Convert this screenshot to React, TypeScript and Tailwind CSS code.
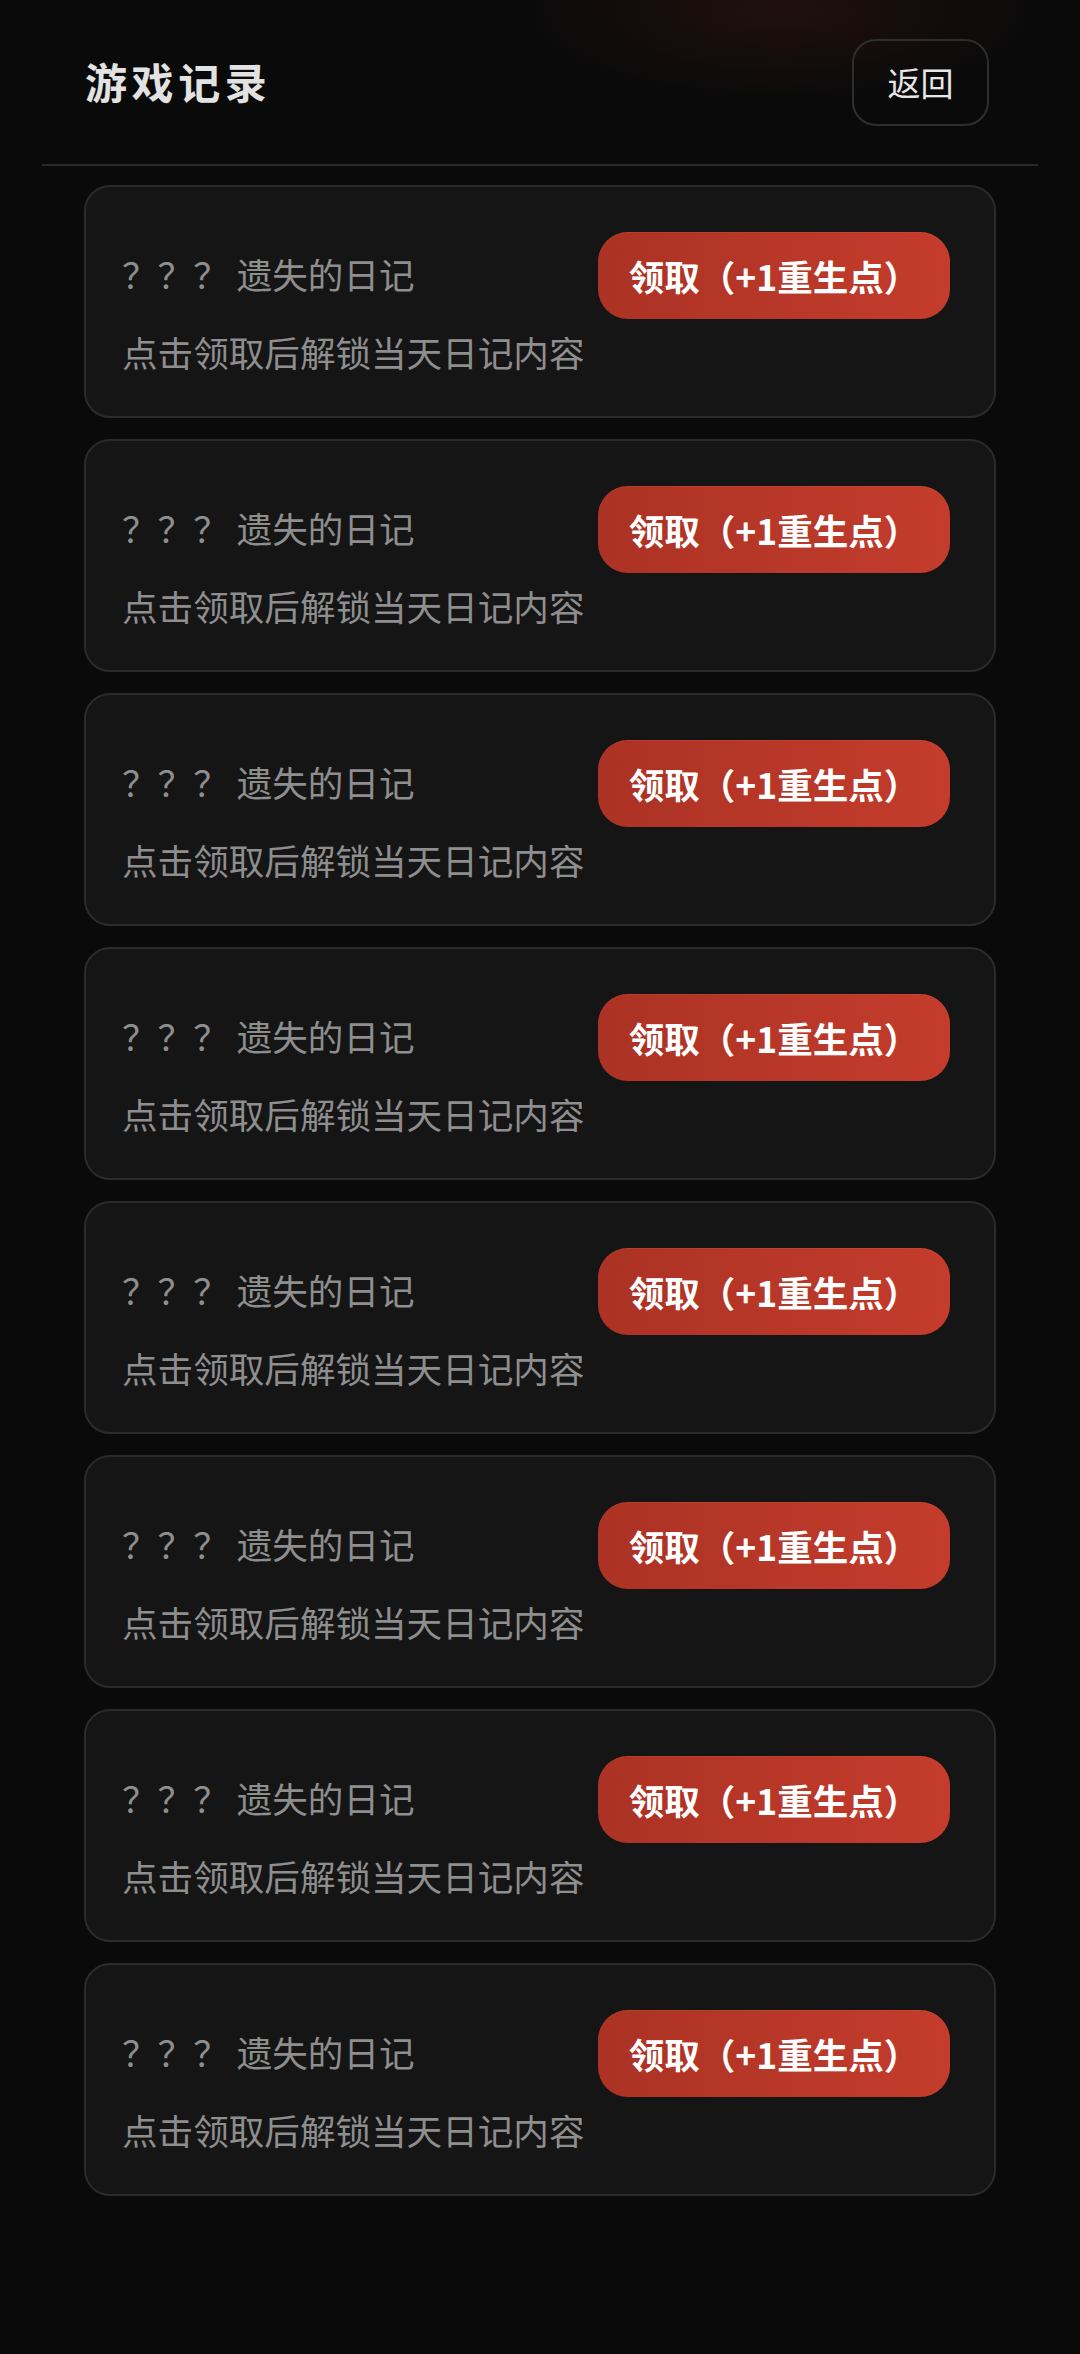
export default function App() {
  const records = Array.from({ length: 8 }, (_, i) => i);

  return (
    <div
      className="min-h-[2354px] w-[1080px] bg-[#0a0a0a] bg-[radial-gradient(ellipse_260px_90px_at_780px_10px,rgba(120,40,25,0.2),transparent)]"
      style={{ fontFamily: '"Noto Sans CJK SC", "Noto Sans", sans-serif' }}
    >
      {/* Header */}
      <div className="mx-[42px] flex items-center justify-between border-b-2 border-[#2a2a2a] pb-[38px] pl-[43px] pr-[49px] pt-[39px]">
        <h1 className="-mt-[4px] text-[42px] font-bold leading-none tracking-[0.11em] text-[#e2e2e2]">游戏记录</h1>
        <button className="flex h-[87px] w-[137px] items-center justify-center rounded-[24px] border-2 border-[#2e2e2e] text-[33px] text-[#e6e6e6]">
          返回
        </button>
      </div>

      {/* Records */}
      <div className="mx-[84px] flex flex-col gap-[21px] pt-[19px]">
        {records.map((i) => (
          <div
            key={i}
            className="h-[233px] rounded-[26px] border-2 border-[#2b2b2b] bg-[#151515] pl-[36px] pr-[44px] pt-[45px]"
          >
            <div className="flex items-center justify-between">
              <span className="-mt-[3px] text-[35.6px] leading-none text-[#8e8e8e]">？？？ 遗失的日记</span>
              <button className="flex h-[87px] w-[352px] items-center justify-center rounded-[30px] bg-gradient-to-r from-[#ab3224] to-[#c43c2c] text-[35.5px] font-bold text-white shadow-[0_1px_0_rgba(255,120,90,0.15)_inset]">
                领取（+1重生点）
              </button>
            </div>
            <p className="mt-[15px] text-[35.6px] leading-none text-[#8e8e8e]">点击领取后解锁当天日记内容</p>
          </div>
        ))}
      </div>
    </div>
  );
}
